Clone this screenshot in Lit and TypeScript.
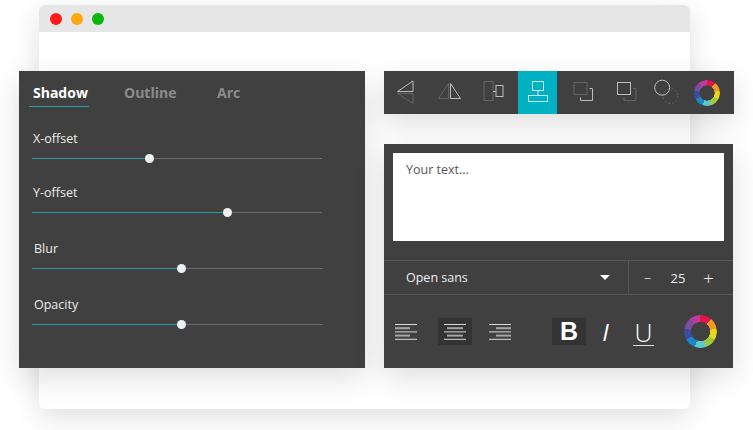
import { LitElement, html, css, svg } from "lit";
import { customElement } from "lit/decorators.js";

const sliders = [
  { label: "X-offset", pct: 40.3, cls: "s1" },
  { label: "Y-offset", pct: 67.2, cls: "s2" },
  { label: "Blur", pct: 51.3, cls: "s3" },
  { label: "Opacity", pct: 51.3, cls: "s4" },
];

const D = "#646464";
const L = "#bdbdbd";

const toolIcons = [
  { x: 384.5, w: 39, on: false, g: svg`
    <path d="M397 91.5 412.5 81V91.5Z" fill="none" stroke=${L}/>
    <path d="M397 93.5 412.5 103.5V93.5Z" fill="none" stroke=${D}/>` },
  { x: 429, w: 39, on: false, g: svg`
    <path d="M438.5 98.5 448.5 83.5V98.5Z" fill="none" stroke=${D}/>
    <path d="M450.5 83.5 460.5 98.5H450.5Z" fill="none" stroke=${L}/>` },
  { x: 473.5, w: 39, on: false, g: svg`
    <rect x="483.5" y="81.5" width="9" height="19" fill="none" stroke=${D}/>
    <rect x="495.5" y="85.5" width="7" height="11" fill="none" stroke=${L}/>
    <path d="M492.5 91.5H495.5" stroke=${L}/>` },
  { x: 518, w: 39, on: true, g: svg`
    <rect x="532.5" y="81.5" width="11" height="9" fill="none" stroke="#c8eef2"/>
    <rect x="528.5" y="95.5" width="19" height="6" fill="none" stroke="#c8eef2"/>
    <path d="M538 90.5V95.5" stroke="#c8eef2"/>` },
  { x: 562.5, w: 39, on: false, g: svg`
    <rect x="573.5" y="82.5" width="13" height="12" fill="none" stroke=${D}/>
    <path d="M589 88.5H592V100.5H580V97.5" fill="none" stroke=${L}/>` },
  { x: 607, w: 39, on: false, g: svg`
    <rect x="617.5" y="82.5" width="13" height="12" fill="none" stroke=${L}/>
    <path d="M633 88.5H636V100.5H624V97.5" fill="none" stroke=${D}/>` },
  { x: 651.5, w: 28, on: false, g: svg`
    <circle cx="670" cy="96" r="7.5" fill="none" stroke=${D} stroke-dasharray="2 2"/>
    <circle cx="661.7" cy="87.7" r="7.5" fill="none" stroke=${L}/>` },
];

@customElement("app-root")
export class AppRoot extends LitElement {
  static styles = css`
    :host {
      display: block;
      position: relative;
      width: 753px;
      height: 430px;
      overflow: hidden;
      background: #fff;
      font-family: "Open Sans", "Liberation Sans", sans-serif;
    }
    .window {
      position: absolute;
      left: 39px;
      top: 5px;
      width: 651px;
      height: 404px;
      background: #fff;
      border-radius: 6px;
      box-shadow: 0 8px 28px rgba(0, 0, 0, 0.13);
      overflow: hidden;
    }
    .titlebar {
      height: 27px;
      background: #e6e6e6;
      display: flex;
      align-items: center;
      gap: 9px;
      padding-left: 11px;
    }
    .dot { width: 12px; height: 12px; border-radius: 50%; }
    .red { background: #ff1a1a; }
    .orange { background: #ffa70f; }
    .green { background: #0ab70a; }

    .panels {
      position: relative;
      display: flex;
      gap: 19px;
      padding: 71px 0 0 19px;
      align-items: flex-start;
    }
    .panel {
      background: #404040;
      box-shadow: 0 10px 28px rgba(0, 0, 0, 0.13);
      color: #f0f0f0;
    }
    .left {
      width: 346px;
      height: 297px;
      box-sizing: border-box;
      padding-left: 13px;
    }
    .tabs {
      position: relative;
      display: flex;
      height: 36px;
      font-size: 14px;
      font-weight: 700;
      line-height: 44px;
      color: #8c8c8c;
    }
    .tab.on { color: #fff; margin-left: 1px; width: 91px; }
    .tab.out { width: 93px; }
    .underline {
      position: absolute;
      left: -3px;
      top: 35px;
      width: 60px;
      height: 1px;
      background: #2f9aa5;
    }
    .slider { width: 290px; }
    .slider.s3, .slider.s4 { width: 291px; }
    .s1 { padding-top: 23px; }
    .s2 { padding-top: 25px; }
    .s3 { padding-top: 27px; }
    .s4 { padding-top: 27px; }
    .lab {
      font-size: 12.5px;
      line-height: 17px;
      padding-left: 1px;
      color: #ececec;
    }
    .s3 .lab, .s4 .lab { padding-left: 2px; }
    .track {
      position: relative;
      height: 1px;
      margin-top: 11px;
      background: #6a6a6a;
    }
    .fill {
      position: absolute;
      left: 0;
      top: 0;
      height: 1px;
      background: #2f9aa5;
    }
    .thumb {
      position: absolute;
      top: -4px;
      width: 9px;
      height: 9px;
      margin-left: -4px;
      border-radius: 50%;
      background: #eef1f4;
    }

    .right {
      width: 349px;
      display: flex;
      flex-direction: column;
      gap: 30px;
    }
    .toolbar {
      width: 350px;
      height: 43px;
      display: flex;
      gap: 5.5px;
      padding-left: 0.5px;
      box-sizing: border-box;
    }
    .tool { display: block; height: 43px; flex: none; }
    .tool.on { background: #00b1c4; }
    .ringtool {
      width: 44.6px;
      display: flex;
      align-items: center;
      justify-content: center;
    }
    .ring {
      border-radius: 50%;
      background: conic-gradient(
        #e3134f 0deg 40deg, #f39a24 40deg 80deg, #e9d71c 80deg 120deg,
        #a3c838 120deg 160deg, #5ec8cc 160deg 200deg, #1b87c9 200deg 240deg,
        #3a4c9f 240deg 280deg, #7b4ca0 280deg 320deg, #bf3a9d 320deg 360deg
      );
      -webkit-mask: radial-gradient(circle closest-side, transparent 57%, #000 60%);
      mask: radial-gradient(circle closest-side, transparent 57%, #000 60%);
    }
    .ring.small { width: 26px; height: 26px; }
    .ring.big { width: 33px; height: 33px; }

    .editor { height: 224px; display: flex; flex-direction: column; }
    .textbox {
      margin: 9px 9px 0;
      height: 88px;
      box-sizing: border-box;
      background: #fff;
      color: #555;
      font-size: 12.5px;
      line-height: 17px;
      padding: 8px 13px;
    }
    .fontrow {
      margin-top: 19px;
      height: 35px;
      box-sizing: border-box;
      border-top: 1px solid #565656;
      border-bottom: 1px solid #565656;
      display: flex;
      align-items: center;
      font-size: 12.5px;
      color: #efefef;
    }
    .family {
      width: 244px;
      box-sizing: border-box;
      padding-left: 22px;
      position: relative;
      margin-top: -1px;
    }
    .arrow {
      position: absolute;
      right: 18px;
      top: 6px;
      width: 0;
      height: 0;
      border-left: 5px solid transparent;
      border-right: 5px solid transparent;
      border-top: 5px solid #fff;
    }
    .stepper {
      height: 100%;
      flex: 1;
      border-left: 1px solid #565656;
      display: flex;
      align-items: center;
      font-size: 13px;
    }
    .stepper span { text-align: center; }
    .minus { width: 37px; color: #ccc; }
    .value { width: 24px; }
    .plus { width: 37px; font-size: 19px; font-weight: 300; line-height: 20px; }
    .fmtrow {
      flex: 1;
      display: flex;
      align-items: center;
      padding-left: 5px;
      box-sizing: border-box;
    }
    .fmt {
      flex: none;
      width: 34px;
      height: 27px;
      display: flex;
      align-items: center;
      justify-content: center;
    }
    .fmt.on { background: #333; }
    .fmt svg { display: block; }
    .m15 { margin-left: 15px; }
    .m11 { margin-left: 11px; }
    .m35 { margin-left: 35px; }
    .m2 { margin-left: 2.5px; }
    .m4 { margin-left: 4px; }
    .m23 { margin-left: 23px; }
    .bold {
      font-family: "Liberation Sans", Arial, sans-serif;
      font-weight: 700;
      font-size: 25px;
      color: #fff;
    }
    .ital {
      font-style: italic;
      font-size: 24px;
      font-weight: 400;
      color: #fff;
    }
    .und {
      position: relative;
      font-size: 25px;
      font-weight: 300;
      color: #fff;
    }
    .und::after {
      content: "";
      position: absolute;
      left: 6px;
      width: 21px;
      bottom: -1px;
      height: 1px;
      background: #ddd;
    }
  `;

  private alignIcon(rows: number[][]) {
    return html`<svg width="22" height="16" viewBox="0 0 22 16">
      ${rows.map(([x, w], i) =>
        i % 2 === 0
          ? svg`<rect x="0" y=${i * 3.7} width="22" height="1" fill="#d8d8d8"></rect>`
          : svg`<rect x=${x} y=${i * 3.7 - 0.5} width=${w} height="2" fill="#a6a6a6"></rect>`
      )}
    </svg>`;
  }

  render() {
    return html`
      <div class="window">
        <div class="titlebar">
          <div class="dot red"></div>
          <div class="dot orange"></div>
          <div class="dot green"></div>
        </div>
      </div>
      <div class="panels">
        <div class="panel left">
          <div class="tabs">
            <div class="underline"></div>
            <div class="tab on">Shadow</div>
            <div class="tab out">Outline</div>
            <div class="tab">Arc</div>
          </div>
          ${sliders.map(
            (s) => html`<div class="slider ${s.cls}">
              <div class="lab">${s.label}</div>
              <div class="track">
                <div class="fill" style="width:${s.pct}%"></div>
                <div class="thumb" style="left:${s.pct}%"></div>
              </div>
            </div>`
          )}
        </div>
        <div class="right">
          <div class="panel toolbar">
            ${toolIcons.map(
              (t) => html`<svg
                class="tool ${t.on ? "on" : ""}"
                width=${t.w}
                height="43"
                viewBox="${t.x} 71 ${t.w} 43"
              >${t.g}</svg>`
            )}
            <div class="ringtool"><div class="ring small"></div></div>
          </div>
          <div class="panel editor">
            <div class="textbox">Your text...</div>
            <div class="fontrow">
              <div class="family">Open sans<span class="arrow"></span></div>
              <div class="stepper">
                <span class="minus">−</span>
                <span class="value">25</span>
                <span class="plus">+</span>
              </div>
            </div>
            <div class="fmtrow">
              <div class="fmt">${this.alignIcon([[0,0],[0,15],[0,0],[0,15],[0,0]])}</div>
              <div class="fmt on m15">${this.alignIcon([[0,0],[3,16],[0,0],[3,16],[0,0]])}</div>
              <div class="fmt m11">${this.alignIcon([[0,0],[7,15],[0,0],[7,15],[0,0]])}</div>
              <div class="fmt on bold m35">B</div>
              <div class="fmt ital m2">I</div>
              <div class="fmt und m4">U</div>
              <div class="ring big m23"></div>
            </div>
          </div>
        </div>
      </div>
    `;
  }
}
